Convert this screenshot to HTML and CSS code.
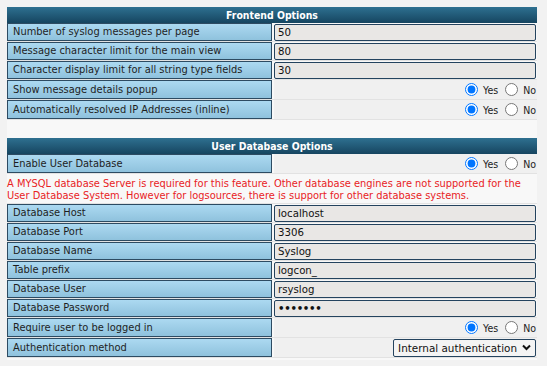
FILE: index.html
```html
<!DOCTYPE html>
<html>
<head>
<meta charset="utf-8">
<link rel="stylesheet" href="styles.css">
</head>
<body>
<div class="panel">
  <div class="head">Frontend Options</div>
  <div class="row"><div class="label">Number of syslog messages per page</div><div class="value"><span class="field" role="textbox">50</span></div></div>
  <div class="row"><div class="label">Message character limit for the main view</div><div class="value"><span class="field" role="textbox">80</span></div></div>
  <div class="row"><div class="label">Character display limit for all string type fields</div><div class="value"><span class="field" role="textbox">30</span></div></div>
  <div class="row tall"><div class="label">Show message details popup</div><div class="value opts"><label class="opt"><input type="radio" name="r1" checked><span>Yes</span></label><label class="opt"><input type="radio" name="r1"><span>No</span></label></div></div>
  <div class="row tall"><div class="label">Automatically resolved IP Addresses (inline)</div><div class="value opts"><label class="opt"><input type="radio" name="r2" checked><span>Yes</span></label><label class="opt"><input type="radio" name="r2"><span>No</span></label></div></div>
  <div class="spacer"></div>
  <div class="head">User Database Options</div>
  <div class="row tall"><div class="label">Enable User Database</div><div class="value opts"><label class="opt"><input type="radio" name="r3" checked><span>Yes</span></label><label class="opt"><input type="radio" name="r3"><span>No</span></label></div></div>
  <div class="warn">A MYSQL database Server is required for this feature. Other database engines are not supported for the User Database System. However for logsources, there is support for other database systems.</div>
  <div class="row"><div class="label">Database Host</div><div class="value"><span class="field" role="textbox">localhost</span></div></div>
  <div class="row"><div class="label">Database Port</div><div class="value"><span class="field" role="textbox">3306</span></div></div>
  <div class="row"><div class="label">Database Name</div><div class="value"><span class="field" role="textbox">Syslog</span></div></div>
  <div class="row"><div class="label">Table prefix</div><div class="value"><span class="field" role="textbox">logcon_</span></div></div>
  <div class="row"><div class="label">Database User</div><div class="value"><span class="field" role="textbox">rsyslog</span></div></div>
  <div class="row"><div class="label">Database Password</div><div class="value"><span class="field pw" role="textbox">•••••••</span></div></div>
  <div class="row tall"><div class="label">Require user to be logged in</div><div class="value opts"><label class="opt"><input type="radio" name="r4" checked><span>Yes</span></label><label class="opt"><input type="radio" name="r4"><span>No</span></label></div></div>
  <div class="row tall"><div class="label">Authentication method</div><div class="value opts"><div class="select"><span>Internal authentication</span><svg class="chev" width="9" height="7" viewBox="0 0 9 7"><path d="M1 1.5 L4.5 5 L8 1.5" fill="none" stroke="#111" stroke-width="2"/></svg></div></div></div>
</div>
</body>
</html>
```
FILE: styles.css
```css
html, body {
  margin: 0;
  padding: 0;
  background: #f2f2f2;
}
body {
  padding: 7px 10px 0 7px;
  font-family: "DejaVu Sans", Verdana, sans-serif;
  font-size: 9.9px;
  color: #1e1e1e;
}
.panel {
  width: 530px;
  background: #f8f8f8;
  padding-bottom: 2px;
}
.head {
  height: 16px;
  line-height: 16px;
  background: linear-gradient(#2e7090, #164560);
  color: #fff;
  font-family: "DejaVu Sans Condensed", "DejaVu Sans", sans-serif;
  font-weight: bold;
  text-align: center;
  font-size: 10.4px;
}
.row {
  box-sizing: border-box;
  display: grid;
  grid-template-columns: 265px 1fr;
  column-gap: 2px;
  height: 19px;
  border-bottom: 1px solid #e2e2e2;
}
.row.tall {
  height: 20px;
}
.label {
  box-sizing: border-box;
  height: 18px;
  border: 1px solid #2d4b62;
  background: linear-gradient(#acd9f1, #8fc2dd);
  padding: 0 0 0 5px;
  line-height: 16px;
  white-space: nowrap;
  overflow: hidden;
}
.row.tall .label {
  height: 19px;
  line-height: 17px;
}
.value {
  display: flex;
  align-items: center;
}
.field {
  box-sizing: border-box;
  display: block;
  width: 262px;
  height: 17px;
  margin: 0;
  padding: 0 3px;
  border: 1px solid #24435e;
  border-radius: 2px;
  background: #e9e7e5;
  font-family: "DejaVu Sans", Verdana, sans-serif;
  font-size: 10.2px;
  line-height: 15px;
  color: #111;
  white-space: nowrap;
  overflow: hidden;
}
.field.pw {
  font-weight: bold;
  letter-spacing: -0.3px;
}
.opts {
  justify-content: flex-end;
  background: #f0f0f0;
  padding-right: 1px;
}
.opt {
  display: flex;
  align-items: center;
  font-family: "DejaVu Sans Condensed", "DejaVu Sans", sans-serif;
  font-size: 10.5px;
  color: #222;
}
.opt input {
  margin: 0 5px 0 7px;
  width: 13px;
  height: 13px;
}
.warn {
  box-sizing: border-box;
  height: 30px;
  color: #e8221e;
  line-height: 12px;
  padding: 4px 0 0 0;
  border-bottom: 1px solid #e2e2e2;
}
.spacer {
  height: 18px;
}
.select {
  box-sizing: border-box;
  height: 18px;
  display: flex;
  align-items: center;
  gap: 5px;
  padding: 0 4px 0 4px;
  border: 1px solid #24435e;
  border-radius: 2px;
  background: #f4f4f4;
  color: #111;
  font-size: 10.4px;
}
.chev {
  display: block;
}
```
